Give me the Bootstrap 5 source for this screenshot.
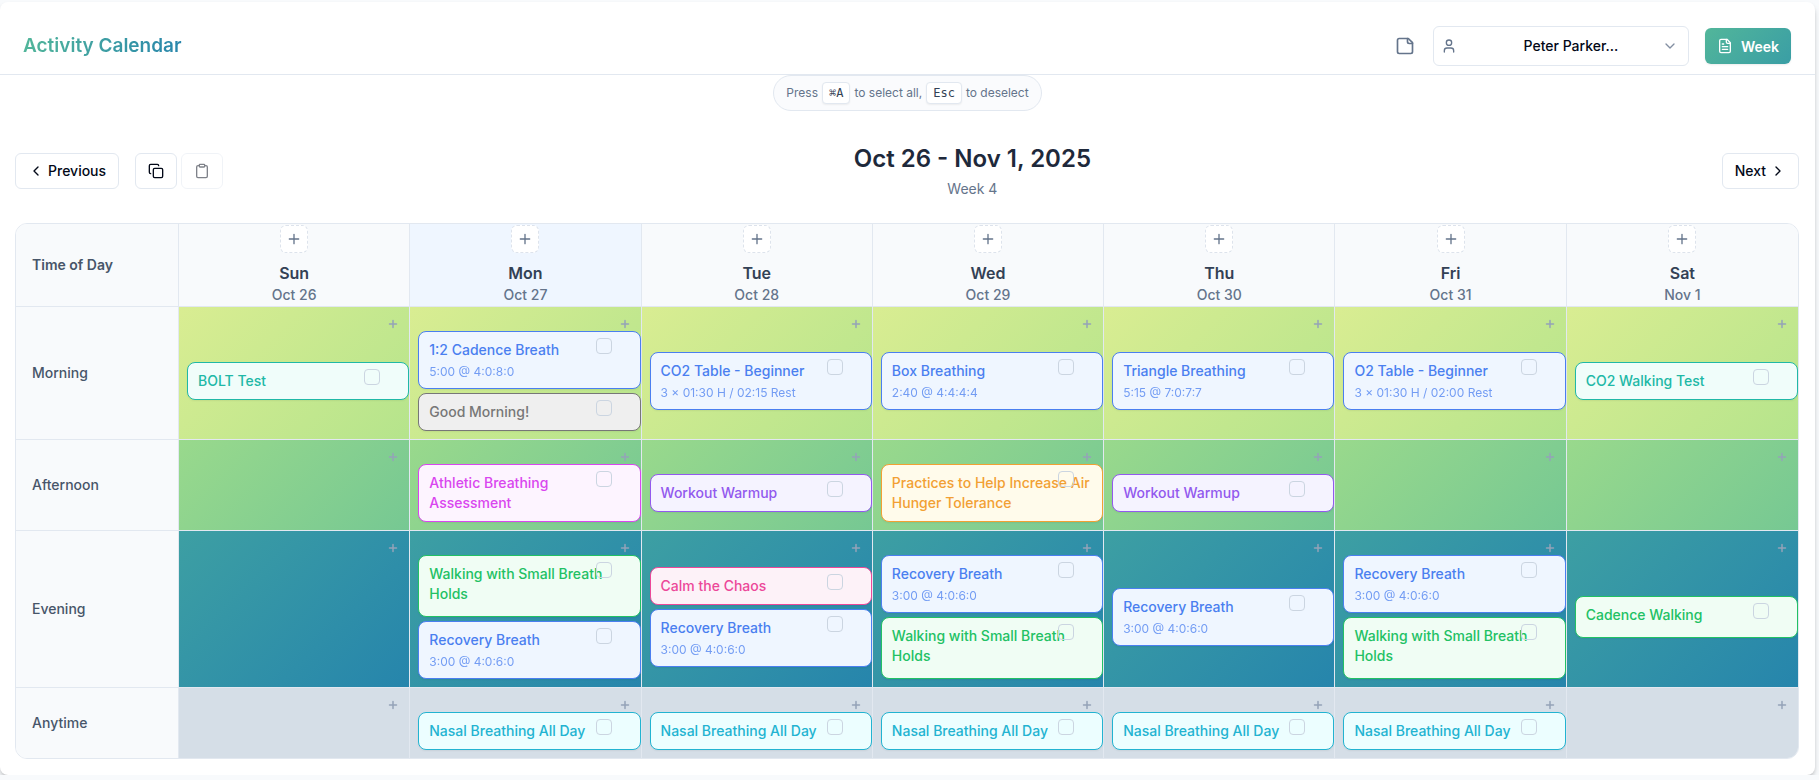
<!DOCTYPE html>
<html lang="en">
<head>
<meta charset="utf-8">
<meta name="viewport" content="width=device-width, initial-scale=1">
<title>Activity Calendar</title>
<link href="https://cdn.jsdelivr.net/npm/bootstrap@5.3.0/dist/css/bootstrap.min.css" rel="stylesheet">
<style>
  body { background: #f8fafc; color: #020817; font: 14px/20px Inter, "Liberation Sans", sans-serif; }
  svg { display: block; flex: none; fill: none; stroke: currentColor; stroke-width: 2; stroke-linecap: round; stroke-linejoin: round; }
  .i12 { width: 12px; height: 12px; stroke-width: 3; }
  .i16 { width: 16px; height: 16px; }
  .i20 { width: 20px; height: 20px; }

  .app-shell { margin: 2px 4px 0 0; padding-bottom: 16px; background: #fff; border-radius: 8px; box-shadow: 0 4px 6px -1px rgba(0,0,0,.2), 0 2px 4px -2px rgba(0,0,0,.2); }
  .app-header { padding: 24px 24px 8px 23px; border-bottom: 1px solid #e2e8f0; }
  .app-title { font-size: 19px; line-height: 28px; font-weight: 600; background: linear-gradient(90deg, #52b69a, #2986ac); -webkit-background-clip: text; background-clip: text; color: transparent; }
  .note-btn { padding: 2px; border: 0; background: none; color: #64748b; }
  .person { width: 256px; }
  .person select { width: 100%; height: 40px; padding: 0 24px 0 44px; border: 1px solid #e2e8f0; border-radius: 6px; background: #fff; color: #020817; font-weight: 500; text-align-last: center; appearance: none; }
  .person svg { position: absolute; top: 12px; pointer-events: none; color: #64748b; }
  .person .who { left: 8px; }
  .person .chev { right: 11px; opacity: .8; }
  .week-btn { --bs-btn-color: #fff; --bs-btn-hover-color: #fff; height: 36px; padding: 0 12px; border: 0; border-radius: 6px; font-size: 14px; font-weight: 600; background: linear-gradient(135deg, #52b69a, #3a9ea5); box-shadow: 0 1px 2px rgba(0,0,0,.08); }

  .hint { padding: 6px 12px; border: 1px solid #e2e8f0; font-size: 12px; line-height: 16px; color: #64748b; background: #fafbfd; }
  .hint kbd { padding: 2px 6px; border: 1px solid #e2e8f0; border-radius: 4px; background: #fff; color: #334155; font: 12px/16px "DejaVu Sans Mono", monospace; box-shadow: 0 1px 2px rgba(0,0,0,.06); }

  .page-body { padding: 0 16px 0 15px; }
  .week-bar { padding: 32px 0 24px; }
  .tool-btn { --bs-btn-color: #020817; --bs-btn-bg: #fff; --bs-btn-border-color: #e2e8f0; --bs-btn-hover-bg: #f1f5f9; --bs-btn-hover-border-color: #e2e8f0; --bs-btn-disabled-color: #020817; --bs-btn-disabled-border-color: #e2e8f0; --bs-btn-disabled-opacity: .5; height: 36px; padding: 0 12px; border-radius: 6px; font-size: 14px; line-height: 20px; font-weight: 500; }
  .range-title { font-size: 24px; line-height: 32px; font-weight: 600; color: #1e293b; }
  .muted { color: #64748b; }

  .calendar { border: 1px solid #e2e8f0; border-radius: 12px; overflow: hidden; }
  .calendar table { width: 100%; table-layout: fixed; border-collapse: separate; border-spacing: 0; }
  .calendar th, .calendar td { border-right: 1px solid #e2e8f0; border-bottom: 1px solid #e2e8f0; }
  .calendar tr > :last-child { border-right: 0; }
  .calendar tbody tr:last-child > * { border-bottom: 0; }
  .col-time { width: 163px; }
  .calendar th { background: #f8fafc; font-weight: 500; color: #475569; padding: 0 16px; }
  .calendar thead th:first-child { font-weight: 600; }
  .calendar thead .day { padding: 1px 0; text-align: center; }
  .calendar thead .today { background: #eff6ff; }
  .day-name { margin-top: 8px; font-size: 16px; line-height: 24px; font-weight: 600; color: #334155; }
  .day-date { color: #64748b; }
  .day-add { width: 28px; height: 28px; padding: 0; border: 1px dashed #dde3ec; border-radius: 6px; background: #fff; color: #64748b; }
  .calendar td { position: relative; padding: 24px 0 8px 8px; vertical-align: middle; }
  .morning td { background: linear-gradient(135deg, #d9ed92, #b5e48c); }
  .afternoon td { background: linear-gradient(135deg, #99d98c, #76c893); }
  .evening td { background: linear-gradient(135deg, #3d9fa3, #2685ac); }
  .anytime td { background: #d5dee7; }
  .slot-add { position: absolute; top: 5px; right: 4px; width: 24px; height: 24px; padding: 0; border: 0; background: none; color: #94a3b8; }

  .activity { display: block; position: relative; padding: 8px 10px; border: 1px solid currentColor; border-radius: 8px; font-weight: 500; box-shadow: 0 1px 2px rgba(0,0,0,.06); }
  .activity + .activity { margin-top: 4px; }
  .activity small { display: block; margin-top: 4px; font-size: 12px; line-height: 16px; font-weight: 400; opacity: .75; }
  .activity input { position: absolute; top: 6px; right: 28px; width: 16px; height: 16px; margin: 0; border: 1px solid #cbd5e1; border-radius: 4px; appearance: none; background: transparent; }
  .a-blue { color: #4a7ff0; background: #eff6ff; }
  .a-teal { color: #20b8a6; background: #f0fdfa; }
  .a-gray { color: #777; background: #efefef; }
  .a-pink { color: #d946ef; background: #fdf4ff; }
  .a-purple { color: #9259ee; background: #f5f3ff; }
  .a-amber { color: #f2a033; background: #fffbeb; }
  .a-green { color: #22c164; background: #f0fdf4; padding-bottom: 12px; }
  .a-rose { color: #ec4899; background: #fdf2f8; }
  .a-cyan { color: #22b3d1; background: #ecfeff; }
</style>
</head>
<body>
<svg class="d-none" aria-hidden="true">
  <symbol id="plus" viewBox="0 0 24 24"><path d="M5 12h14M12 5v14"/></symbol>
  <symbol id="note" viewBox="0 0 24 24"><path d="M16 3H5a2 2 0 0 0-2 2v14a2 2 0 0 0 2 2h14a2 2 0 0 0 2-2V8Z"/><path d="M15 3v4a2 2 0 0 0 2 2h4"/></symbol>
  <symbol id="user" viewBox="0 0 24 24"><circle cx="12" cy="7" r="4"/><path d="M19 21v-2a4 4 0 0 0-4-4H9a4 4 0 0 0-4 4v2"/></symbol>
  <symbol id="file" viewBox="0 0 24 24"><path d="M15 2H6a2 2 0 0 0-2 2v16a2 2 0 0 0 2 2h12a2 2 0 0 0 2-2V7Z"/><path d="M14 2v4a2 2 0 0 0 2 2h4M10 9H8M16 13H8M16 17H8"/></symbol>
  <symbol id="down" viewBox="0 0 24 24"><path d="m6 9 6 6 6-6"/></symbol>
  <symbol id="left" viewBox="0 0 24 24"><path d="m15 18-6-6 6-6"/></symbol>
  <symbol id="right" viewBox="0 0 24 24"><path d="m9 18 6-6-6-6"/></symbol>
  <symbol id="copy" viewBox="0 0 24 24"><rect x="8" y="8" width="14" height="14" rx="2"/><path d="M4 16c-1.100 0-2-.9-2-2V4c0-1.100.9-2 2-2h10c1.100 0 2 .9 2 2"/></symbol>
  <symbol id="clip" viewBox="0 0 24 24"><rect x="8" y="2" width="8" height="4" rx="1"/><path d="M16 4h2a2 2 0 0 1 2 2v14a2 2 0 0 1-2 2H6a2 2 0 0 1-2-2V6a2 2 0 0 1 2-2h2"/></symbol>
</svg>

<div class="app-shell">
  <header class="app-header d-flex align-items-center justify-content-between">
    <h1 class="app-title mb-0">Activity Calendar</h1>
    <div class="d-flex align-items-center gap-3">
      <button type="button" class="note-btn" aria-label="Notes"><svg class="i20"><use href="#note"/></svg></button>
      <div class="person position-relative">
        <select class="d-block" aria-label="Person"><option>Peter Parker...</option></select>
        <svg class="i16 who"><use href="#user"/></svg>
        <svg class="i16 chev"><use href="#down"/></svg>
      </div>
      <button type="button" class="btn week-btn d-flex align-items-center gap-2"><svg class="i16"><use href="#file"/></svg>Week</button>
    </div>
  </header>

  <div class="d-flex justify-content-center">
    <div class="hint rounded-pill d-flex align-items-center gap-1">
      <span>Press</span><kbd>⌘A</kbd><span>to select all,</span><kbd>Esc</kbd><span>to deselect</span>
    </div>
  </div>

  <main class="page-body">
    <div class="week-bar d-flex align-items-center justify-content-between">
      <div class="d-flex gap-3">
        <button type="button" class="btn tool-btn d-flex align-items-center gap-1"><svg class="i16"><use href="#left"/></svg>Previous</button>
        <div class="d-flex gap-1">
          <button type="button" class="btn tool-btn d-flex align-items-center" aria-label="Copy week"><svg class="i16"><use href="#copy"/></svg></button>
          <button type="button" class="btn tool-btn d-flex align-items-center" aria-label="Paste week" disabled><svg class="i16"><use href="#clip"/></svg></button>
        </div>
      </div>
      <div class="text-center">
        <h2 class="range-title mb-1">Oct 26 - Nov 1, 2025</h2>
        <div class="muted">Week 4</div>
      </div>
      <button type="button" class="btn tool-btn d-flex align-items-center gap-1">Next<svg class="i16"><use href="#right"/></svg></button>
    </div>

    <div class="calendar">
      <table>
        <colgroup><col class="col-time"><col span="7"></colgroup>
        <thead>
          <tr>
            <th scope="col">Time of Day</th>
            <th scope="col" class="day"><button type="button" class="day-add d-flex align-items-center justify-content-center mx-auto" aria-label="Add on Sunday"><svg class="i16"><use href="#plus"/></svg></button><div class="day-name">Sun</div><div class="day-date">Oct 26</div></th>
            <th scope="col" class="day today"><button type="button" class="day-add d-flex align-items-center justify-content-center mx-auto" aria-label="Add on Monday"><svg class="i16"><use href="#plus"/></svg></button><div class="day-name">Mon</div><div class="day-date">Oct 27</div></th>
            <th scope="col" class="day"><button type="button" class="day-add d-flex align-items-center justify-content-center mx-auto" aria-label="Add on Tuesday"><svg class="i16"><use href="#plus"/></svg></button><div class="day-name">Tue</div><div class="day-date">Oct 28</div></th>
            <th scope="col" class="day"><button type="button" class="day-add d-flex align-items-center justify-content-center mx-auto" aria-label="Add on Wednesday"><svg class="i16"><use href="#plus"/></svg></button><div class="day-name">Wed</div><div class="day-date">Oct 29</div></th>
            <th scope="col" class="day"><button type="button" class="day-add d-flex align-items-center justify-content-center mx-auto" aria-label="Add on Thursday"><svg class="i16"><use href="#plus"/></svg></button><div class="day-name">Thu</div><div class="day-date">Oct 30</div></th>
            <th scope="col" class="day"><button type="button" class="day-add d-flex align-items-center justify-content-center mx-auto" aria-label="Add on Friday"><svg class="i16"><use href="#plus"/></svg></button><div class="day-name">Fri</div><div class="day-date">Oct 31</div></th>
            <th scope="col" class="day"><button type="button" class="day-add d-flex align-items-center justify-content-center mx-auto" aria-label="Add on Saturday"><svg class="i16"><use href="#plus"/></svg></button><div class="day-name">Sat</div><div class="day-date">Nov 1</div></th>
          </tr>
        </thead>
        <tbody>
          <tr class="morning">
            <th scope="row">Morning</th>
            <td><button type="button" class="slot-add d-flex align-items-center justify-content-center" aria-label="Add activity"><svg class="i12"><use href="#plus"/></svg></button>
              <label class="activity a-teal">BOLT Test<input type="checkbox"></label></td>
            <td><button type="button" class="slot-add d-flex align-items-center justify-content-center" aria-label="Add activity"><svg class="i12"><use href="#plus"/></svg></button>
              <label class="activity a-blue">1:2 Cadence Breath<small>5:00 @ 4:0:8:0</small><input type="checkbox"></label>
              <label class="activity a-gray">Good Morning!<input type="checkbox"></label></td>
            <td><button type="button" class="slot-add d-flex align-items-center justify-content-center" aria-label="Add activity"><svg class="i12"><use href="#plus"/></svg></button>
              <label class="activity a-blue">CO2 Table - Beginner<small>3 × 01:30 H / 02:15 Rest</small><input type="checkbox"></label></td>
            <td><button type="button" class="slot-add d-flex align-items-center justify-content-center" aria-label="Add activity"><svg class="i12"><use href="#plus"/></svg></button>
              <label class="activity a-blue">Box Breathing<small>2:40 @ 4:4:4:4</small><input type="checkbox"></label></td>
            <td><button type="button" class="slot-add d-flex align-items-center justify-content-center" aria-label="Add activity"><svg class="i12"><use href="#plus"/></svg></button>
              <label class="activity a-blue">Triangle Breathing<small>5:15 @ 7:0:7:7</small><input type="checkbox"></label></td>
            <td><button type="button" class="slot-add d-flex align-items-center justify-content-center" aria-label="Add activity"><svg class="i12"><use href="#plus"/></svg></button>
              <label class="activity a-blue">O2 Table - Beginner<small>3 × 01:30 H / 02:00 Rest</small><input type="checkbox"></label></td>
            <td><button type="button" class="slot-add d-flex align-items-center justify-content-center" aria-label="Add activity"><svg class="i12"><use href="#plus"/></svg></button>
              <label class="activity a-teal">CO2 Walking Test<input type="checkbox"></label></td>
          </tr>
          <tr class="afternoon">
            <th scope="row">Afternoon</th>
            <td><button type="button" class="slot-add d-flex align-items-center justify-content-center" aria-label="Add activity"><svg class="i12"><use href="#plus"/></svg></button></td>
            <td><button type="button" class="slot-add d-flex align-items-center justify-content-center" aria-label="Add activity"><svg class="i12"><use href="#plus"/></svg></button>
              <label class="activity a-pink">Athletic Breathing<br>Assessment<input type="checkbox"></label></td>
            <td><button type="button" class="slot-add d-flex align-items-center justify-content-center" aria-label="Add activity"><svg class="i12"><use href="#plus"/></svg></button>
              <label class="activity a-purple">Workout Warmup<input type="checkbox"></label></td>
            <td><button type="button" class="slot-add d-flex align-items-center justify-content-center" aria-label="Add activity"><svg class="i12"><use href="#plus"/></svg></button>
              <label class="activity a-amber">Practices to Help Increase Air Hunger Tolerance<input type="checkbox"></label></td>
            <td><button type="button" class="slot-add d-flex align-items-center justify-content-center" aria-label="Add activity"><svg class="i12"><use href="#plus"/></svg></button>
              <label class="activity a-purple">Workout Warmup<input type="checkbox"></label></td>
            <td><button type="button" class="slot-add d-flex align-items-center justify-content-center" aria-label="Add activity"><svg class="i12"><use href="#plus"/></svg></button></td>
            <td><button type="button" class="slot-add d-flex align-items-center justify-content-center" aria-label="Add activity"><svg class="i12"><use href="#plus"/></svg></button></td>
          </tr>
          <tr class="evening">
            <th scope="row">Evening</th>
            <td><button type="button" class="slot-add d-flex align-items-center justify-content-center" aria-label="Add activity"><svg class="i12"><use href="#plus"/></svg></button></td>
            <td><button type="button" class="slot-add d-flex align-items-center justify-content-center" aria-label="Add activity"><svg class="i12"><use href="#plus"/></svg></button>
              <label class="activity a-green">Walking with Small Breath Holds<input type="checkbox"></label>
              <label class="activity a-blue">Recovery Breath<small>3:00 @ 4:0:6:0</small><input type="checkbox"></label></td>
            <td><button type="button" class="slot-add d-flex align-items-center justify-content-center" aria-label="Add activity"><svg class="i12"><use href="#plus"/></svg></button>
              <label class="activity a-rose">Calm the Chaos<input type="checkbox"></label>
              <label class="activity a-blue">Recovery Breath<small>3:00 @ 4:0:6:0</small><input type="checkbox"></label></td>
            <td><button type="button" class="slot-add d-flex align-items-center justify-content-center" aria-label="Add activity"><svg class="i12"><use href="#plus"/></svg></button>
              <label class="activity a-blue">Recovery Breath<small>3:00 @ 4:0:6:0</small><input type="checkbox"></label>
              <label class="activity a-green">Walking with Small Breath Holds<input type="checkbox"></label></td>
            <td><button type="button" class="slot-add d-flex align-items-center justify-content-center" aria-label="Add activity"><svg class="i12"><use href="#plus"/></svg></button>
              <label class="activity a-blue">Recovery Breath<small>3:00 @ 4:0:6:0</small><input type="checkbox"></label></td>
            <td><button type="button" class="slot-add d-flex align-items-center justify-content-center" aria-label="Add activity"><svg class="i12"><use href="#plus"/></svg></button>
              <label class="activity a-blue">Recovery Breath<small>3:00 @ 4:0:6:0</small><input type="checkbox"></label>
              <label class="activity a-green">Walking with Small Breath Holds<input type="checkbox"></label></td>
            <td><button type="button" class="slot-add d-flex align-items-center justify-content-center" aria-label="Add activity"><svg class="i12"><use href="#plus"/></svg></button>
              <label class="activity a-green">Cadence Walking<input type="checkbox"></label></td>
          </tr>
          <tr class="anytime">
            <th scope="row">Anytime</th>
            <td><button type="button" class="slot-add d-flex align-items-center justify-content-center" aria-label="Add activity"><svg class="i12"><use href="#plus"/></svg></button></td>
            <td><button type="button" class="slot-add d-flex align-items-center justify-content-center" aria-label="Add activity"><svg class="i12"><use href="#plus"/></svg></button>
              <label class="activity a-cyan">Nasal Breathing All Day<input type="checkbox"></label></td>
            <td><button type="button" class="slot-add d-flex align-items-center justify-content-center" aria-label="Add activity"><svg class="i12"><use href="#plus"/></svg></button>
              <label class="activity a-cyan">Nasal Breathing All Day<input type="checkbox"></label></td>
            <td><button type="button" class="slot-add d-flex align-items-center justify-content-center" aria-label="Add activity"><svg class="i12"><use href="#plus"/></svg></button>
              <label class="activity a-cyan">Nasal Breathing All Day<input type="checkbox"></label></td>
            <td><button type="button" class="slot-add d-flex align-items-center justify-content-center" aria-label="Add activity"><svg class="i12"><use href="#plus"/></svg></button>
              <label class="activity a-cyan">Nasal Breathing All Day<input type="checkbox"></label></td>
            <td><button type="button" class="slot-add d-flex align-items-center justify-content-center" aria-label="Add activity"><svg class="i12"><use href="#plus"/></svg></button>
              <label class="activity a-cyan">Nasal Breathing All Day<input type="checkbox"></label></td>
            <td><button type="button" class="slot-add d-flex align-items-center justify-content-center" aria-label="Add activity"><svg class="i12"><use href="#plus"/></svg></button></td>
          </tr>
        </tbody>
      </table>
    </div>
  </main>
</div>
<script src="https://cdn.jsdelivr.net/npm/bootstrap@5.3.0/dist/js/bootstrap.bundle.min.js"></script>
</body>
</html>
